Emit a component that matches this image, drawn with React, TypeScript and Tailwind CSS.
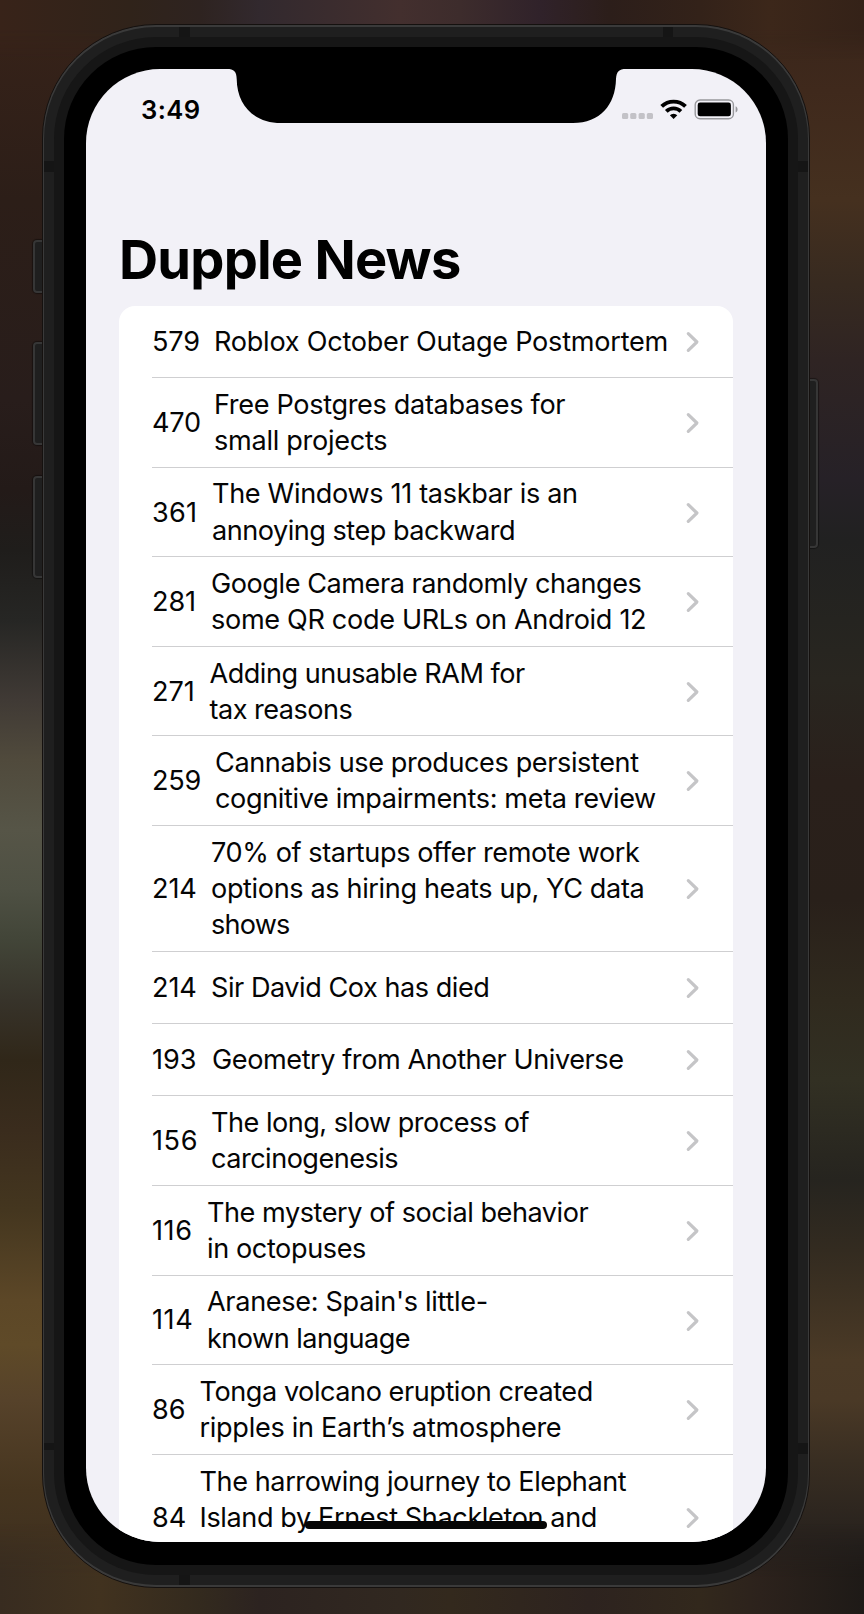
import React from "react";

type Line = { text: string; track: string };
type Story = { points: string; indent: string; height: string; lines: Line[] };

const H1 = "h-[72.3px]";
const H2 = "h-[89.6px]";
const H3 = "h-[125.8px]";

const stories: Story[] = [
  { points: "579", indent: "w-[62px] tracking-[-0.2px]", height: H1, lines: [{ text: "Roblox October Outage Postmortem", track: "tracking-[-0.25px]" }] },
  { points: "470", indent: "w-[62px] tracking-[-0.2px]", height: H2, lines: [{ text: "Free Postgres databases for", track: "tracking-[-0.34px]" }, { text: "small projects", track: "tracking-[-0.28px]" }] },
  { points: "361", indent: "w-[60px] tracking-[0.2px]", height: H2, lines: [{ text: "The Windows 11 taskbar is an", track: "tracking-[-0.34px]" }, { text: "annoying step backward", track: "tracking-[-0.5px]" }] },
  { points: "281", indent: "w-[59px] tracking-[-0.1px]", height: H2, lines: [{ text: "Google Camera randomly changes", track: "tracking-[-0.45px]" }, { text: "some QR code URLs on Android 12", track: "tracking-[-0.33px]" }] },
  { points: "271", indent: "w-[57.5px] tracking-[-0.1px]", height: H2, lines: [{ text: "Adding unusable RAM for", track: "tracking-[-0.5px]" }, { text: "tax reasons", track: "tracking-[-0.52px]" }] },
  { points: "259", indent: "w-[63px] tracking-[-0.2px]", height: H2, lines: [{ text: "Cannabis use produces persistent", track: "tracking-[-0.4px]" }, { text: "cognitive impairments: meta review", track: "tracking-[-0.37px]" }] },
  { points: "214", indent: "w-[59px] tracking-[-0.1px]", height: H3, lines: [{ text: "70% of startups offer remote work", track: "tracking-[-0.4px]" }, { text: "options as hiring heats up, YC data", track: "tracking-[-0.37px]" }, { text: "shows", track: "tracking-[-0.8px]" }] },
  { points: "214", indent: "w-[59px] tracking-[-0.1px]", height: H1, lines: [{ text: "Sir David Cox has died", track: "tracking-[-0.47px]" }] },
  { points: "193", indent: "w-[60px]", height: H1, lines: [{ text: "Geometry from Another Universe", track: "tracking-[-0.43px]" }] },
  { points: "156", indent: "w-[59px] tracking-[0.6px]", height: H2, lines: [{ text: "The long, slow process of", track: "tracking-[-0.5px]" }, { text: "carcinogenesis", track: "tracking-[-0.52px]" }] },
  { points: "116", indent: "w-[55px] tracking-[0.6px]", height: H2, lines: [{ text: "The mystery of social behavior", track: "tracking-[-0.46px]" }, { text: "in octopuses", track: "tracking-[-0.4px]" }] },
  { points: "114", indent: "w-[55px] tracking-[0.6px]", height: H2, lines: [{ text: "Aranese: Spain's little-", track: "tracking-[-0.32px]" }, { text: "known language", track: "tracking-[-0.53px]" }] },
  { points: "86", indent: "w-[47.5px] tracking-[-0.1px]", height: H2, lines: [{ text: "Tonga volcano eruption created", track: "tracking-[-0.45px]" }, { text: "ripples in Earth’s atmosphere", track: "tracking-[-0.3px]" }] },
  { points: "84", indent: "w-[47.5px] tracking-[-0.1px]", height: H3, lines: [{ text: "The harrowing journey to Elephant", track: "tracking-[-0.42px]" }, { text: "Island by Ernest Shackleton and", track: "tracking-[-0.39px]" }, { text: "", track: "" }] },
];

function Backdrop() {
  return (
    <div className="absolute inset-0 flex">
      <div className="w-1/2 bg-[linear-gradient(180deg,#382319_0px,#2c1e18_200px,#281d1b_400px,#231a18_490px,#1f1d1b_550px,#262624_620px,#403a35_700px,#504a3c_760px,#565547_830px,#4e5043_890px,#424538_940px,#37332a_1000px,#302719_1060px,#3a2c1d_1130px,#44361f_1210px,#5c4727_1300px,#5f4a28_1345px,#56422a_1400px,#46351f_1490px,#382c20_1614px)]" />
      <div className="w-1/2 bg-[linear-gradient(180deg,#38251b_0px,#3f291c_90px,#45301f_200px,#372a20_285px,#2f2423_360px,#262127_480px,#212121_540px,#252420_620px,#292620_680px,#2a201b_780px,#29201a_900px,#302a1e_1000px,#323023_1080px,#26241f_1180px,#332b20_1250px,#4b3a26_1360px,#4a3926_1400px,#392e22_1460px,#25201d_1550px,#1e1a17_1614px)]" />
      <div className="absolute inset-x-0 top-0 h-[60px] bg-[linear-gradient(90deg,#382319_0px,#30231a_130px,#2e2320_200px,#32292e_260px,#432f2e_400px,#3d2c2c_460px,#30222a_540px,#2c1e1a_610px,#332219_700px,#3c271a_770px,#342218_864px)] [mask-image:linear-gradient(#000_50%,transparent)]" />
      <div className="absolute inset-x-0 bottom-0 h-[90px] bg-[linear-gradient(90deg,#382c20_0px,#41321f_100px,#332a1e_200px,#2c2320_260px,#312820_400px,#33291d_450px,#2d231f_590px,#32281c_700px,#2c221c_760px,#1e1a17_864px)] [mask-image:linear-gradient(transparent,#000_60%)]" />
    </div>
  );
}

function SideButton({ size }: { size: string }) {
  return <div className={`w-[16px] rounded-[4px] border-2 border-[#363636] bg-[#1f1f1f] shadow-[0_0_1px_1px_#0006] ${size}`} />;
}

function AntennaBands() {
  return (
    <div className="absolute inset-0 flex flex-col justify-between px-px py-[2px]">
      <div className="flex justify-between pr-[135px] pl-[135px]">
        <i className="h-[10px] w-[10.5px] bg-[#151515]" />
        <i className="h-[10px] w-[10.5px] bg-[#151515]" />
      </div>
      <div className="flex grow flex-col justify-between pt-[124px] pb-[121px]">
        <div className="flex justify-between">
          <i className="h-[11px] w-[10px] bg-[#151515]" />
          <i className="h-[11px] w-[10px] bg-[#151515]" />
        </div>
        <div className="flex justify-between">
          <i className="h-[7px] w-[10px] bg-[#151515]" />
          <i className="h-[11px] w-[10px] bg-[#151515]" />
        </div>
      </div>
      <i className="ml-[135px] h-[10px] w-[10.5px] bg-[#151515]" />
    </div>
  );
}

function Notch() {
  return (
    <svg className="-mt-px h-[55px] w-[400px] shrink-0" viewBox="0 0 400 55" fill="#000">
      <path d="M0 0V1C7 1 9.5 3.5 9.7 11C9.9 37 27 55 54 55H346C373 55 388.5 37 389 11C389.5 3.5 392 1 399 1V0Z" />
    </svg>
  );
}

function StatusIcons() {
  return (
    <svg className="h-[22px] w-[118px]" viewBox="0 0 118 22">
      <g fill="#c3c2c7">
        <rect x="0" y="15" width="6.2" height="6" rx="1.5" />
        <rect x="8.2" y="15" width="6.2" height="6" rx="1.5" />
        <rect x="16.6" y="15" width="6.2" height="6" rx="1.5" />
        <rect x="24.8" y="15" width="6.2" height="6" rx="1.5" />
      </g>
      <g fill="none" stroke="#000" strokeWidth="3.9">
        <path d="M39.7 8.4a17.1 17.1 0 0 1 23.8 0" />
        <path d="M44.3 13.3a10.5 10.5 0 0 1 14.6 0" />
      </g>
      <path d="M51.6 21l-3.7-3.7a5.2 5.2 0 0 1 7.4 0z" />
      <rect x="73.2" y="2" width="38.2" height="18.7" rx="4.8" fill="none" stroke="#98989c" strokeWidth="1.4" />
      <rect x="75.7" y="4.5" width="33.2" height="13.8" rx="2.4" />
      <path d="M113.6 8.2C116.2 9.2 116.2 13.5 113.6 14.5Z" fill="#98989c" />
    </svg>
  );
}

function Chevron() {
  return (
    <svg className="ml-auto h-[22px] w-[14px] shrink-0" viewBox="0 0 14 22" fill="none" stroke="#c5c5c7" strokeWidth="3.2" strokeLinecap="round" strokeLinejoin="round">
      <path d="M2.3 2.7L10.9 11L2.3 19.3" />
    </svg>
  );
}

export default function App() {
  return (
    <main className="relative flex h-[1614px] w-[864px] items-start overflow-hidden pt-[24px] pl-[33px] font-[Inter,sans-serif] text-black">
      <Backdrop />
      <div className="relative flex w-[9px] shrink-0 flex-col pt-[216px]">
        <SideButton size="h-[53px]" />
        <SideButton size="mt-[49px] h-[103px]" />
        <SideButton size="mt-[31px] h-[102px]" />
      </div>
      <div className="relative z-10 h-[1564px] w-[768px] shrink-0 rounded-[114px] border border-[#15110f] bg-[#3a3a3a] px-px py-[2px]">
        <div className="h-full rounded-[112px] bg-[#1f1f1f] p-[10px]">
          <div className="h-full rounded-[102px] bg-[#161616] p-[10px]">
            <div className="h-full rounded-[92px] bg-black pt-[22px] pl-[22px]">
              <section className="relative h-[1473px] w-[680px] overflow-hidden rounded-[74px] bg-[#f2f1f7]">
                <header className="flex h-[156px] items-start">
                  <time className="w-[141px] shrink-0 pt-[25px] pl-[55px] text-[25.6px] leading-[32px] font-semibold tracking-[0.4px]">3:49</time>
                  <Notch />
                  <div className="-ml-[5px] shrink-0 pt-[29px]"><StatusIcons /></div>
                </header>
                <h1 className="ml-[33px] pt-[1px] text-[54.2px] leading-[67px] font-bold tracking-[-0.8px]">Dupple News</h1>
                <ul className="mt-[12.7px] ml-[33px] w-[614px] rounded-t-[16px] bg-white pl-[33px]">
                  {stories.map((s, i) => (
                    <li key={i} className={`flex items-center border-b border-[#cfcfd1] pt-[1.5px] pr-[33px] text-[27.1px] leading-[36.2px] text-[#050505] ${s.height}`}>
                      <span className={`shrink-0 ${s.indent}`}>{s.points}</span>
                      <div className="whitespace-nowrap">
                        {s.lines.map((l, n) => (
                          <p key={n} className={`min-h-[36.2px] ${l.track}`}>{l.text}</p>
                        ))}
                      </div>
                      <Chevron />
                    </li>
                  ))}
                </ul>
                <div className="absolute inset-x-0 bottom-[13.5px] flex justify-center">
                  <div className="h-[8px] w-[242px] rounded-full bg-[#060606]" />
                </div>
              </section>
            </div>
          </div>
        </div>
        <AntennaBands />
      </div>
      <div className="relative -ml-[8.5px] flex shrink-0 flex-col pt-[355px]">
        <SideButton size="h-[169px]" />
      </div>
    </main>
  );
}
